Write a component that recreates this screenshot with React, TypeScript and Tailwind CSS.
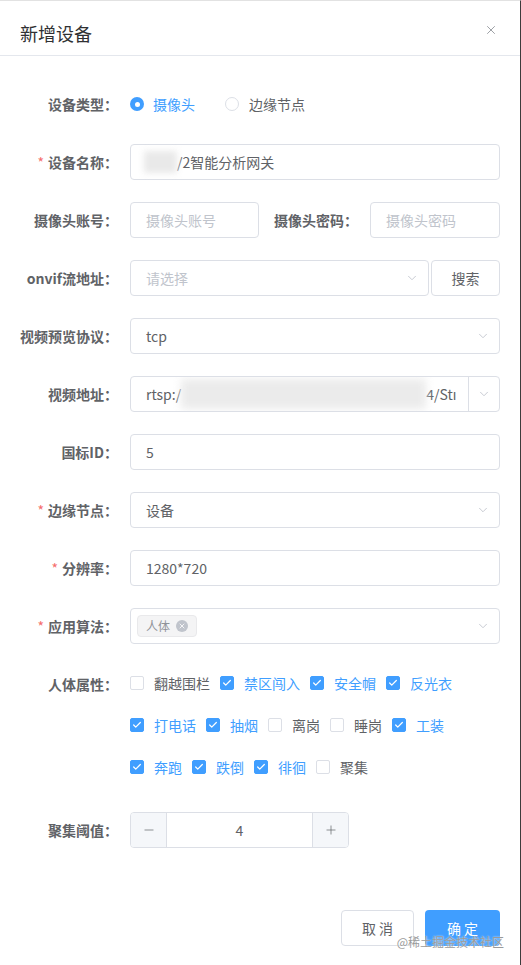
import { ChevronDown, X, Check, Minus, Plus } from "lucide-react";

const FONT = { fontFamily: '"Noto Sans CJK SC", "Noto Sans", sans-serif' };

function Label({ text, required, width = "w-[110px]" }: { text: string; required?: boolean; width?: string }) {
    return (
        <div className={`${width} shrink-0 pr-3 text-right text-[14px] leading-9 font-bold text-[#606266] whitespace-nowrap`}>
            {required && <span className="text-[#f56c6c] mr-1 font-normal">*</span>}
            {text}
        </div>
    );
}

function Row({ children, className = "mb-[22px]" }: { children: React.ReactNode; className?: string }) {
    return <div className={`flex items-start ${className}`}>{children}</div>;
}

function Input({ value, placeholder, className = "" }: { value?: string; placeholder?: string; className?: string }) {
    return (
        <div className={`h-9 border border-[#dcdfe6] rounded-[4px] px-[15px] flex items-center text-[14px] bg-white ${className}`}>
            {value ? <span className="text-[#606266]">{value}</span> : <span className="text-[#c0c4cc]">{placeholder}</span>}
        </div>
    );
}

function Select({ value, placeholder, className = "" }: { value?: string; placeholder?: string; className?: string }) {
    return (
        <div className={`h-9 border border-[#dcdfe6] rounded-[4px] pl-[15px] pr-[9px] flex items-center justify-between text-[14px] bg-white ${className}`}>
            {value ? <span className="text-[#606266]">{value}</span> : <span className="text-[#c0c4cc]">{placeholder}</span>}
            <ChevronDown size={14} strokeWidth={1.5} className="text-[#c0c4cc]" />
        </div>
    );
}

function Box({ label, checked }: { label: string; checked?: boolean }) {
    return (
        <div className="flex items-center mr-[10px]">
            <span
                className={`w-[14px] h-[14px] rounded-[2px] border flex items-center justify-center ${checked ? "bg-[#409eff] border-[#409eff]" : "bg-white border-[#dcdfe6]"}`}
            >
                {checked && <Check size={10} strokeWidth={3} className="text-white" />}
            </span>
            <span className={`pl-[10px] text-[14px] ${checked ? "text-[#409eff]" : "text-[#606266]"}`}>{label}</span>
        </div>
    );
}

export default function App() {
    return (
        <div style={FONT} className="w-[521px] h-[965px] bg-white relative flex flex-col border-t border-[#e2e2e2] border-r border-r-[#3c3c3c] overflow-hidden">
            {/* header */}
            <div className="px-5 pt-5 pb-[10px] border-b border-[#e4e7ed] relative">
                <div className="text-[18px] leading-6 text-[#303133]">新增设备</div>
                <X size={14} strokeWidth={1.5} className="absolute top-[22px] right-[22px] text-[#909399]" />
            </div>

            {/* body */}
            <div className="px-5 pt-[30px] pb-[30px]">
                <Row>
                    <Label text="设备类型：" />
                    <div className="h-9 flex items-center text-[14px]">
                        <span className="w-[14px] h-[14px] rounded-full bg-[#409eff] flex items-center justify-center">
                            <span className="w-[5px] h-[5px] rounded-full bg-white" />
                        </span>
                        <span className="pl-[9px] text-[#409eff] mr-[30px]">摄像头</span>
                        <span className="w-[14px] h-[14px] rounded-full border border-[#dcdfe6]" />
                        <span className="pl-[10px] text-[#606266]">边缘节点</span>
                    </div>
                </Row>

                <Row>
                    <Label text="设备名称：" required />
                    <div className="flex-1 h-9 border border-[#dcdfe6] rounded-[4px] pl-[13px] flex items-center text-[14px] text-[#606266]">
                        <div className="w-[33px] h-[22px] bg-[#e9e9e9] blur-[3px]" />
                        <span>/2智能分析网关</span>
                    </div>
                </Row>

                <Row>
                    <Label text="摄像头账号：" />
                    <Input placeholder="摄像头账号" className="w-[129px]" />
                    <Label text="摄像头密码：" width="w-[111px]" />
                    <Input placeholder="摄像头密码" className="flex-1" />
                </Row>

                <Row>
                    <Label text="onvif流地址：" />
                    <Select placeholder="请选择" className="flex-1" />
                    <div className="ml-[2px] w-[69px] h-9 border border-[#dcdfe6] rounded-[4px] flex items-center justify-center text-[14px] text-[#606266]">
                        搜索
                    </div>
                </Row>

                <Row>
                    <Label text="视频预览协议：" />
                    <Select value="tcp" className="flex-1" />
                </Row>

                <Row>
                    <Label text="视频地址：" />
                    <div className="flex-1 h-9 border border-[#dcdfe6] rounded-[4px] flex items-stretch text-[14px] text-[#606266] overflow-hidden">
                        <div className="flex-1 flex items-center pl-[15px] overflow-hidden whitespace-nowrap">
                            <span>rtsp:/</span>
                            <div className="w-[245px] h-[30px] shrink-0 bg-[#ebebeb] blur-[4px]" />
                            <span>4/Stı</span>
                        </div>
                        <div className="w-[31px] border-l border-[#dcdfe6] flex items-center justify-center">
                            <ChevronDown size={14} strokeWidth={1.5} className="text-[#c0c4cc]" />
                        </div>
                    </div>
                </Row>

                <Row>
                    <Label text="国标ID：" />
                    <Input value="5" className="flex-1" />
                </Row>

                <Row>
                    <Label text="边缘节点：" required />
                    <Select value="设备" className="flex-1" />
                </Row>

                <Row>
                    <Label text="分辨率：" required />
                    <Input value="1280*720" className="flex-1" />
                </Row>

                <Row>
                    <Label text="应用算法：" required />
                    <div className="flex-1 h-9 border border-[#dcdfe6] rounded-[4px] pl-[6px] pr-[9px] flex items-center justify-between">
                        <div className="h-[22px] px-2 bg-[#f4f4f5] border border-[#e9e9eb] rounded-[4px] flex items-center gap-[6px] text-[12px] text-[#909399]">
                            人体
                            <span className="w-[12px] h-[12px] rounded-full bg-[#c0c4cc] flex items-center justify-center">
                                <X size={8} strokeWidth={2.5} className="text-white" />
                            </span>
                        </div>
                        <ChevronDown size={14} strokeWidth={1.5} className="text-[#c0c4cc]" />
                    </div>
                </Row>

                <Row className="mb-[24px]">
                    <Label text="人体属性：" />
                    <div className="flex flex-col gap-[4px] -mt-[2px] mb-[2px]">
                        <div className="h-[38px] flex items-center">
                            <Box label="翻越围栏" />
                            <Box label="禁区闯入" checked />
                            <Box label="安全帽" checked />
                            <Box label="反光衣" checked />
                        </div>
                        <div className="h-[38px] flex items-center">
                            <Box label="打电话" checked />
                            <Box label="抽烟" checked />
                            <Box label="离岗" />
                            <Box label="睡岗" />
                            <Box label="工装" checked />
                        </div>
                        <div className="h-[38px] flex items-center">
                            <Box label="奔跑" checked />
                            <Box label="跌倒" checked />
                            <Box label="徘徊" checked />
                            <Box label="聚集" />
                        </div>
                    </div>
                </Row>

                <Row>
                    <Label text="聚集阈值：" />
                    <div className="w-[219px] h-9 border border-[#dcdfe6] rounded-[4px] flex overflow-hidden">
                        <div className="w-[36px] bg-[#f5f7fa] border-r border-[#dcdfe6] flex items-center justify-center">
                            <Minus size={14} strokeWidth={1.2} className="text-[#606266]" />
                        </div>
                        <div className="flex-1 flex items-center justify-center text-[14px] text-[#606266]">4</div>
                        <div className="w-[36px] bg-[#f5f7fa] border-l border-[#dcdfe6] flex items-center justify-center">
                            <Plus size={14} strokeWidth={1.2} className="text-[#606266]" />
                        </div>
                    </div>
                </Row>
            </div>

            {/* footer */}
            <div className="px-5 pt-[10px] pb-5 flex justify-end gap-[11px]">
                <button className="w-[73px] h-9 border border-[#dcdfe6] rounded-[4px] bg-white text-[14px] text-[#606266]">
                    取 消
                </button>
                <button className="w-[75px] h-9 rounded-[4px] bg-[#409eff] text-[14px] text-white">确 定</button>
            </div>

            <div className="absolute right-[16px] bottom-[15px] text-[12px] leading-4 text-[#9a9a9a] [text-shadow:0_0_2px_#fff]">
                @稀土掘金技术社区
            </div>
        </div>
    );
}
